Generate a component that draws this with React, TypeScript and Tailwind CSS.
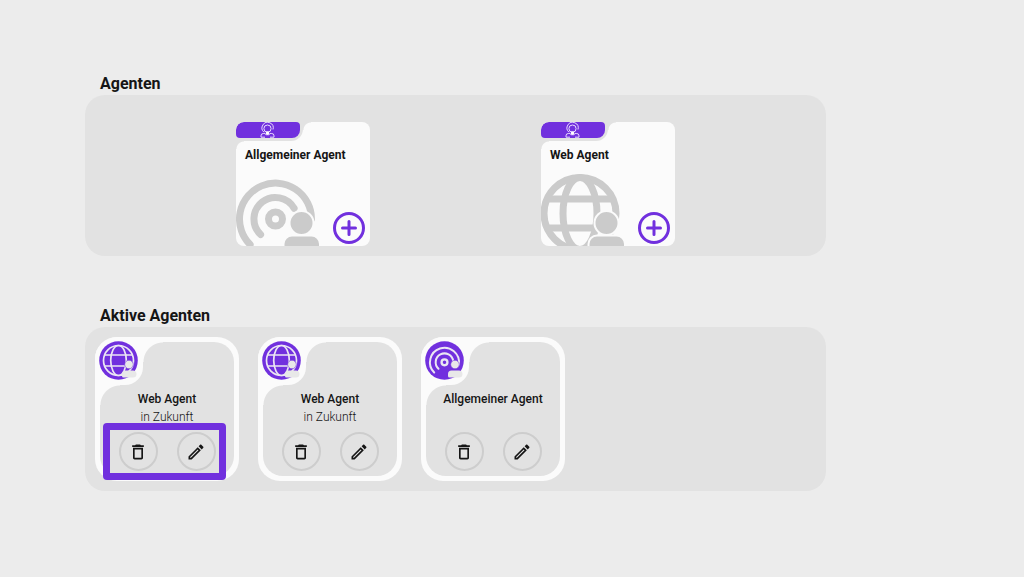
import type { ReactNode } from 'react';
import { MdDeleteOutline, MdOutlineEdit } from 'react-icons/md';

type AgentKind = 'general' | 'web';

interface ActiveAgent {
  id: number;
  kind: AgentKind;
  name: string;
  note?: string;
  highlighted?: boolean;
}

const templates: { kind: AgentKind; name: string }[] = [
  { kind: 'general', name: 'Allgemeiner Agent' },
  { kind: 'web', name: 'Web Agent' },
];

const activeAgents: ActiveAgent[] = [
  { id: 1, kind: 'web', name: 'Web Agent', note: 'in Zukunft', highlighted: true },
  { id: 2, kind: 'web', name: 'Web Agent', note: 'in Zukunft' },
  { id: 3, kind: 'general', name: 'Allgemeiner Agent' },
];

function TabIcon() {
  return (
    <svg className="h-4 w-4" viewBox="0 0 16 16" fill="none" stroke="#eadcff" strokeWidth="1" aria-hidden="true">
      <path d="M4 10.200A5.600 5.600 0 1 1 13 7.500" />
      <circle cx="7.500" cy="6.600" r="3.600" />
      <path d="M5 15.200h-4v-1.400a2.300 2.300 0 0 1 2.300-2.300h1.600l1.200 1.200h2.800l1.200-1.200h1.600a2.300 2.300 0 0 1 2.300 2.300v1.400h-4" />
      <circle cx="7.500" cy="11" r="1.700" fill="#fff" stroke="none" />
    </svg>
  );
}

function LargeIcon({ kind }: { kind: AgentKind }) {
  return (
    <svg className="h-[74px] w-[86px]" viewBox="0 50 86 74" fill="none" aria-hidden="true">
      {kind === 'general' ? (
        <g stroke="#cbcbcb" strokeWidth="7" strokeLinecap="round">
          <path d="M14.100 122.600A36 36 0 1 1 75.500 97" />
          <path d="M24.600 112.500A21.500 21.500 0 1 1 58.100 86.250" />
          <circle cx="39.500" cy="97" r="7" />
        </g>
      ) : (
        <g stroke="#cbcbcb" strokeWidth="7">
          <circle cx="39" cy="91.500" r="36" />
          <ellipse cx="39" cy="91.500" rx="17" ry="36" />
          <path d="M6 77h67M6 106h67" />
        </g>
      )}
      <g fill="#cbcbcb" stroke="#fbfbfb" strokeWidth="2">
        <circle cx="65.500" cy="101" r="12" />
        <path d="M47.500 128v-6a8.500 8.500 0 0 1 8.500-8.500h19.500a8.500 8.500 0 0 1 8.500 8.500v6z" />
      </g>
    </svg>
  );
}

function BadgeIcon({ kind }: { kind: AgentKind }) {
  return (
    <svg className="h-10 w-10" viewBox="-19.5 -19.5 40 40" fill="none" aria-hidden="true">
      <circle r="19.300" fill="#7130de" />
      {kind === 'web' ? (
        <g stroke="#ebe6f3" strokeWidth="1.700">
          <circle r="15" />
          <ellipse rx="7.800" ry="15" />
          <path d="M-14-5.500h28M-14 5.500h28" />
        </g>
      ) : (
        <g stroke="#ebe6f3" strokeWidth="2" strokeLinecap="round">
          <path d="M-10.300 12A14.500 14.500 0 1 1 14.300 4" />
          <path d="M-6 8.200A8.800 8.800 0 1 1 8.700 .600" />
          <circle cy="1.800" r="2.900" strokeWidth="2.400" />
        </g>
      )}
      <circle cx="10.500" cy="4" r="4.300" fill="#e8e8e8" stroke="#7130de" strokeWidth="0.600" />
      <path d="M3.500 13.500a3.500 3.500 0 0 1 3.500-3.500h7.500a3.500 3.500 0 0 1 3.500 3.500a3.500 3.500 0 0 1-3.500 3.500h-9.500a1.500 1.500 0 0 1-1.500-1.500z" fill="#e8e8e8" />
    </svg>
  );
}

function PlusIcon() {
  return (
    <svg className="h-8 w-8" viewBox="0 0 32 32" fill="none" stroke="#7130de" strokeWidth="3" strokeLinecap="round" aria-hidden="true">
      <circle cx="16" cy="16" r="14.500" />
      <path d="M16 9.500v13M9.500 16h13" />
    </svg>
  );
}

function Section({ title, children }: { title: string; children: ReactNode }) {
  return (
    <section>
      <h2 className="pl-[15px] text-base leading-[22px] font-bold">{title}</h2>
      {children}
    </section>
  );
}

function TemplateCard({ kind, name }: { kind: AgentKind; name: string }) {
  return (
    <article className="relative flex h-[124px] w-[134px] flex-col overflow-hidden rounded-lg bg-[#fbfbfb]">
      <div className="relative h-[19px] w-[67px] rounded-br-xl bg-[#e2e2e2]">
        <div className="flex h-4 w-16 justify-center rounded-tl-lg rounded-tr-sm rounded-br-lg rounded-bl-sm bg-[#7130de]">
          <TabIcon />
        </div>
        <span className="absolute top-0 left-full size-2 bg-[radial-gradient(circle_at_100%_100%,transparent_7px,#e2e2e2_8px)]" />
        <span className="absolute top-full left-0 size-2 bg-[radial-gradient(circle_at_100%_100%,transparent_7px,#e2e2e2_8px)]" />
      </div>
      <h3 className="px-[9px] pt-1 text-xs leading-5 font-bold">{name}</h3>
      <div className="mt-auto flex items-end justify-between pr-[5px]">
        <div className="-mt-5">
          <LargeIcon kind={kind} />
        </div>
        <button type="button" aria-label={`${name} hinzufügen`} className="mb-[2px] rounded-full">
          <PlusIcon />
        </button>
      </div>
    </article>
  );
}

function RoundButton({ label, children }: { label: string; children: ReactNode }) {
  return (
    <button
      type="button"
      aria-label={label}
      className="flex size-[39px] items-center justify-center rounded-full border-2 border-[#cdcdcd] text-xl text-[#151515]"
    >
      {children}
    </button>
  );
}

function ActiveCard({ agent }: { agent: ActiveAgent }) {
  return (
    <article className="relative size-36 rounded-[22px] bg-[#fbfbfb] p-[5px]">
      <div className="flex h-full flex-col items-center rounded-[20px] bg-[#e2e2e2] pt-12 pb-[5px]">
        <h3 className="text-xs leading-[18px] font-medium">{agent.name}</h3>
        {agent.note && <p className="text-xs leading-[18px] font-light">{agent.note}</p>}
        <div className="mt-auto flex gap-[19px]">
          <RoundButton label="Löschen">
            <MdDeleteOutline />
          </RoundButton>
          <RoundButton label="Bearbeiten">
            <MdOutlineEdit />
          </RoundButton>
        </div>
      </div>

      {/* notch that holds the badge */}
      <div className="absolute top-0 left-0 size-12 rounded-tl-[22px] rounded-br-[18px] bg-[#fbfbfb] pt-1 pl-1">
        <BadgeIcon kind={agent.kind} />
      </div>
      <span className="absolute top-[5px] left-12 size-5 bg-[radial-gradient(circle_at_100%_100%,transparent_19px,#fbfbfb_20px)]" />
      <span className="absolute top-12 left-[5px] size-5 bg-[radial-gradient(circle_at_100%_100%,transparent_19px,#fbfbfb_20px)]" />

      {agent.highlighted && (
        <div className="pointer-events-none absolute top-[86px] left-2 h-[57px] w-[123px] rounded border-[7px] border-[#7130de]" />
      )}
    </article>
  );
}

export default function App() {
  return (
    <main className="min-h-screen bg-[#ececec] pt-[73px] pl-[85px] font-[Roboto,sans-serif] text-[#151515]">
      <div className="flex max-w-[741px] flex-col gap-[49px]">
        <Section title="Agenten">
          <div className="flex flex-wrap justify-evenly gap-5 rounded-[20px] bg-[#e2e2e2] pt-[27px] pb-[10px]">
            {templates.map((t) => (
              <TemplateCard key={t.kind} kind={t.kind} name={t.name} />
            ))}
          </div>
        </Section>
        <Section title="Aktive Agenten">
          <div className="flex flex-wrap gap-[19px] rounded-[20px] bg-[#e2e2e2] p-[10px]">
            {activeAgents.map((agent) => (
              <ActiveCard key={agent.id} agent={agent} />
            ))}
          </div>
        </Section>
      </div>
    </main>
  );
}
